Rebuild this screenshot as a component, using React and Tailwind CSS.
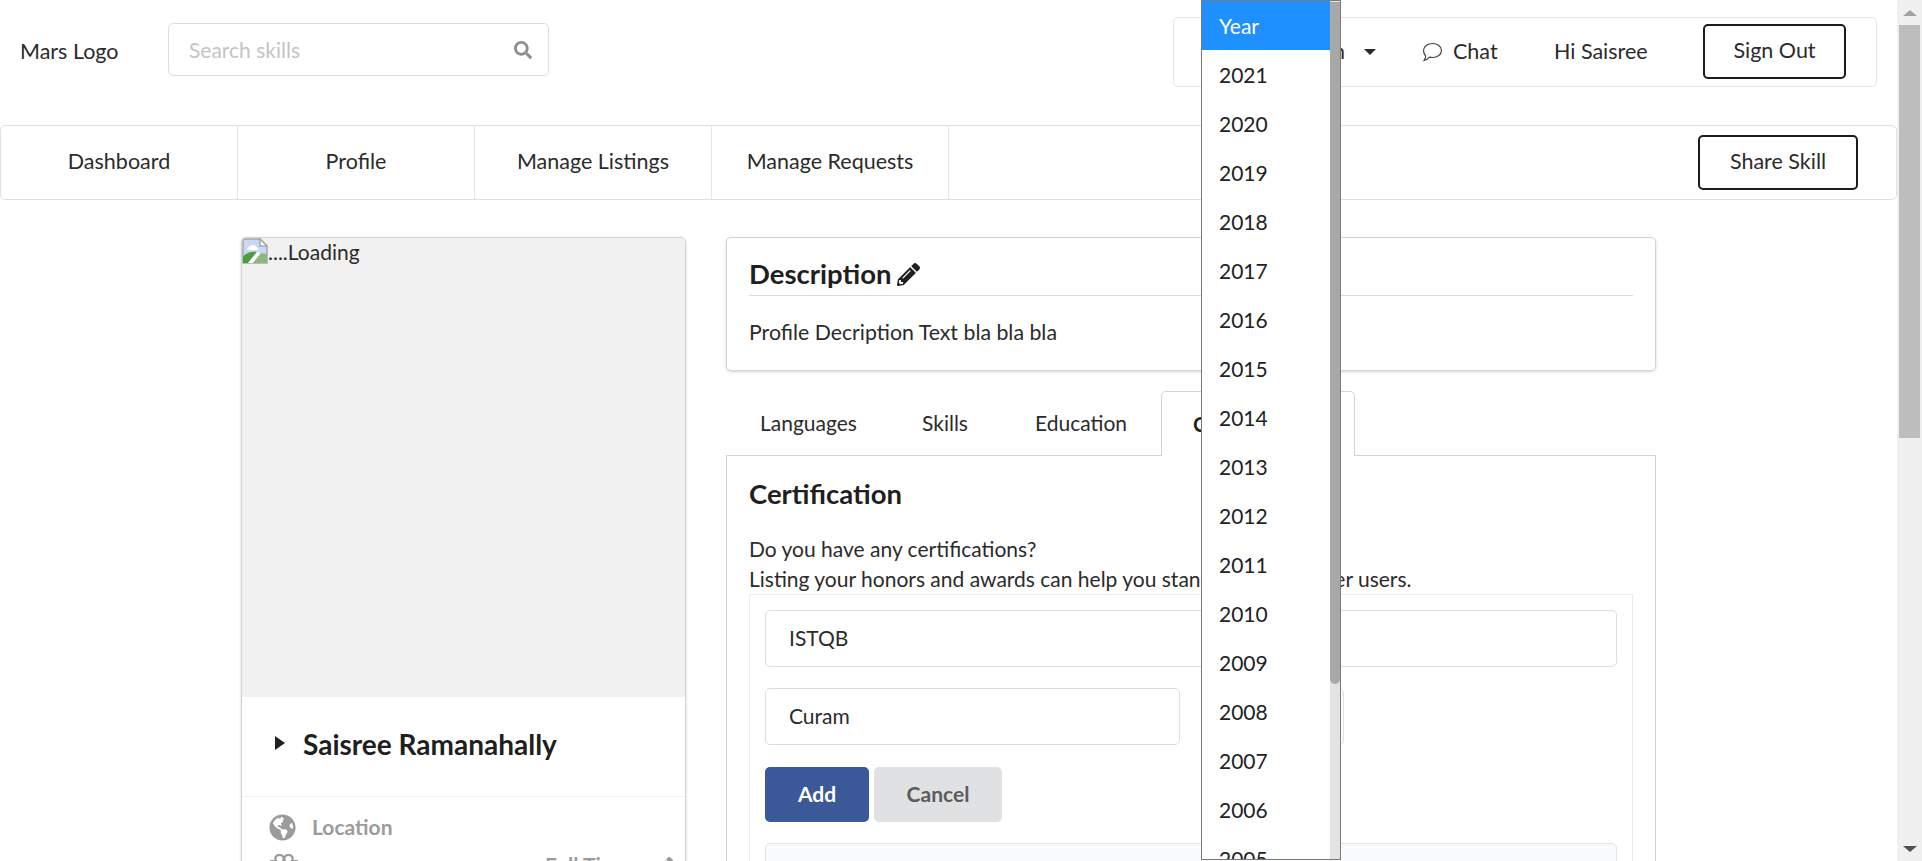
import { FaGlobeAmericas, FaPencilAlt, FaSearch } from 'react-icons/fa'

const NAV_ITEMS = ['Dashboard', 'Profile', 'Manage Listings', 'Manage Requests']
const TABS = [
  { label: 'Languages', width: 'w-[162px]' },
  { label: 'Skills', width: 'w-[113px]' },
  { label: 'Education', width: 'w-[126px]' },
]
const YEARS = ['2021', '2020', '2019', '2018', '2017', '2016', '2015', '2014', '2013', '2012', '2011', '2010', '2009', '2008', '2007', '2006', '2005']

function BrokenImageIcon() {
  return (
    <svg width="26" height="26" viewBox="0 0 26 26" className="shrink-0">
      <path d="M1 1h17l7 7v17H1z" fill="#c9d8f2" stroke="#a8a8a8" strokeWidth="1.5" />
      <path d="M18 1v7h7z" fill="#fff" stroke="#a8a8a8" strokeWidth="1.5" />
      <path d="M5 12c1-4 4-5 6-5s4 2 6 5z" fill="#fff" />
      <path d="M1 25v-6c3-4 8-6 14-5l-9 11z" fill="#4f9e3d" />
      <path d="M6 25l9-11 4 1-8 10z" fill="#fff" />
      <path d="M11 25l8-10 6 1v9z" fill="#8fb57f" />
    </svg>
  )
}

function ChatIcon() {
  return (
    <svg width="21" height="20" viewBox="0 0 21 20" className="shrink-0">
      <path
        d="M10.5 1.500c5 0 9 3 9 7s-4 7-9 7c-1 0-2-.1-3-.4-1.200 1.400-3 2.900-5.500 3.400 1-1.300 1.600-2.800 1.700-4.500C2.500 12.700 1.500 10.700 1.500 8.500c0-4 4-7 9-7z"
        fill="none"
        stroke="#444"
        strokeWidth="1.200"
      />
    </svg>
  )
}

function PuzzleIcon() {
  return (
    <svg width="30" height="28" viewBox="0 0 30 28" className="shrink-0">
      <path
        d="M2 27V7h5c-2-4 1-6 3.500-6s5.500 2 3.500 6h2c-2-4 1-6 3.500-6s5.500 2 3.500 6h5v20"
        fill="none"
        stroke="#9b9b9b"
        strokeWidth="2.200"
      />
    </svg>
  )
}

function YearDropdown() {
  return (
    <div className="absolute left-[1201px] top-0 z-20 flex h-[860px] w-[140px] overflow-hidden border border-[#7a7a7a] bg-white text-[21px]">
      <div className="min-w-0 flex-1 overflow-hidden">
        <div className="flex h-[49px] items-center bg-[#1e90ff] pl-[17px] text-white">Year</div>
        {YEARS.map((year) => (
          <div key={year} className="flex h-[49px] items-center pl-[17px] text-[#222]">
            {year}
          </div>
        ))}
      </div>
      <div className="w-[10px] shrink-0 bg-[#e3e3e3]">
        <div className="mt-[1px] h-[682px] rounded-b-[5px] bg-[#a8a8a8]" />
      </div>
    </div>
  )
}

function PageScrollbar() {
  return (
    <div className="flex w-[25px] shrink-0 flex-col items-center bg-[#f0f0f0] px-[2px]">
      <div className="flex h-[25px] items-center justify-center">
        <div className="h-0 w-0 border-x-[7px] border-b-[6px] border-x-transparent border-b-[#a3a3a3]" />
      </div>
      <div className="h-[413px] w-full bg-[#bdbdbd]" />
      <div className="flex-1" />
      <div className="flex h-[25px] items-center justify-center">
        <div className="h-0 w-0 border-x-[7px] border-t-[6px] border-x-transparent border-t-[#505050]" />
      </div>
    </div>
  )
}

function ProfileCard() {
  return (
    <div className="h-[640px] w-[445px] shrink-0 overflow-hidden rounded-t-[5px] border border-[#d4d4d5] shadow-[0_1px_3px_0_#d4d4d5]">
      <div className="flex h-[459px] items-start bg-[#f1f1f1]">
        <BrokenImageIcon />
        <span className="leading-[28px]">....Loading</span>
      </div>
      <div className="flex h-[100px] items-center border-b border-[#eeeeee] pb-[5px] pl-[33px]">
        <div className="mt-[-3px] h-0 w-0 border-y-[7.5px] border-l-[10px] border-y-transparent border-l-[#1f1f1f]" />
        <span className="ml-[18px] text-[28px] font-bold text-[#1f1f1f]">Saisree Ramanahally</span>
      </div>
      <div className="pl-[27px] pt-[17px] font-bold text-[#9b9b9b]">
        <div className="flex h-[26px] items-center gap-[16px]">
          <FaGlobeAmericas className="h-[27px] w-[27px]" />
          <span>Location</span>
        </div>
        <div className="mt-[14px] flex items-start">
          <PuzzleIcon />
          <span className="ml-[246px] mt-[-1px] leading-[24px]">Full Time</span>
          <FaPencilAlt className="ml-[25px] mt-[3px] h-[18px] w-[18px]" />
        </div>
      </div>
    </div>
  )
}

function CertificationPanel() {
  return (
    <div className="h-[420px] border border-[#d4d4d5] px-[22px] pt-[20px]">
      <h3 className="text-[27.5px] font-bold leading-[36px] text-[#1f1f1f]">Certification</h3>
      <p className="mt-[22px] leading-[30px]">
        Do you have any certifications?
        <br />
        Listing your honors and awards can help you stand out from other users.
      </p>
      <div className="border border-[#ececec] px-[15px] pt-[15px]">
        <div className="flex h-[57px] items-center rounded-[5px] border border-[#dedede] pb-[2px] pl-[23px]">ISTQB</div>
        <div className="mt-[21px] flex gap-[23px]">
          <div className="flex h-[57px] w-[415px] items-center rounded-[5px] border border-[#dedede] pb-[1px] pl-[23px]">Curam</div>
          <div className="h-[57px] w-[141px] rounded-[5px] border border-[#dedede]" />
        </div>
        <div className="mt-[22px] flex gap-[5px]">
          <button className="h-[55px] w-[104px] rounded-[5px] bg-[#3b5998] pb-[1px] font-bold text-white">Add</button>
          <button className="h-[55px] w-[128px] rounded-[5px] bg-[#e0e1e2] pb-[1px] font-bold text-[#5c5c5c]">Cancel</button>
        </div>
        <div className="mt-[21px] h-[60px] rounded-t-[5px] border border-[#e4e4e4] bg-[#f9fafb]" />
      </div>
    </div>
  )
}

export default function App() {
  return (
    <div className="relative flex h-[861px] overflow-hidden bg-white font-['Lato','Open_Sans',sans-serif] text-[21px] text-[#2b2b2b]">
      <div className="min-w-0 flex-1">
        <header className="flex h-[125px] items-start pr-[20px] pt-[17px] text-[21.5px]">
          <span className="mt-[19px] w-[168px] pl-[20px] leading-[30px]">Mars Logo</span>
          <div className="mt-[6px] flex h-[53px] w-[381px] items-center justify-between rounded-[5px] border border-[#dedede] pl-[20px] pr-[16px] text-[21px]">
            <span className="text-[#c4c4c4]">Search skills</span>
            <FaSearch className="h-[18px] w-[18px] text-[#8f8f8f]" />
          </div>
          <div className="ml-auto flex h-[70px] w-[704px] items-center rounded-[5px] border border-[#e6e6e6]">
            <span className="w-[171px] pb-[2px] text-right">Notification</span>
            <div className="ml-[19px] mt-[-1px] h-0 w-0 border-x-[6px] border-t-[6px] border-x-transparent border-t-[#2b2b2b]" />
            <div className="ml-[46px]">
              <ChatIcon />
            </div>
            <span className="ml-[10px] w-[101px] pb-[2px]">Chat</span>
            <span className="w-[149px] pb-[2px]">Hi Saisree</span>
            <button className="-mt-px h-[55px] w-[143px] rounded-[5px] border-2 border-[#1b1c1d] pb-[2px]">Sign Out</button>
          </div>
        </header>

        <nav className="flex h-[75px] items-center rounded-[5px] border border-[#e0e0e0] text-[21.5px]">
          {NAV_ITEMS.map((item) => (
            <div key={item} className="flex h-full w-[237px] items-center justify-center border-r border-[#e6e6e6] pb-[2px]">
              {item}
            </div>
          ))}
          <button className="ml-auto mr-[38px] h-[55px] w-[160px] rounded-[5px] border-2 border-[#1b1c1d] pb-[2px]">Share Skill</button>
        </nav>

        <main className="flex gap-[40px] pl-[241px] pt-[37px]">
          <ProfileCard />
          <div className="w-[930px] shrink-0">
            <section className="h-[134px] rounded-[5px] border border-[#d4d4d5] px-[22px] pt-[18px] shadow-[0_1px_3px_0_#d4d4d5]">
              <div className="flex items-center gap-[6px] border-b border-[#dcdcdc] pb-[3px]">
                <h3 className="text-[27.5px] font-bold leading-[36px] text-[#1f1f1f]">Description</h3>
                <FaPencilAlt className="h-[23px] w-[23px] text-[#1f1f1f]" />
              </div>
              <p className="mt-[21px] text-[21.3px] leading-[30px]">Profile Decription Text bla bla bla</p>
            </section>

            <div className="mt-[20px] flex h-[64px] items-start pl-[34px]">
              {TABS.map((tab) => (
                <span key={tab.label} className={`${tab.width} flex h-[64px] items-center`}>{tab.label}</span>
              ))}
              <span className="relative z-10 flex h-[65px] w-[194px] items-center rounded-t-[5px] border-x border-t border-[#d4d4d5] bg-white pl-[31px] font-bold text-[#1f1f1f]">
                Certifications
              </span>
            </div>
            <CertificationPanel />
          </div>
        </main>
      </div>
      <PageScrollbar />
      <YearDropdown />
    </div>
  )
}
